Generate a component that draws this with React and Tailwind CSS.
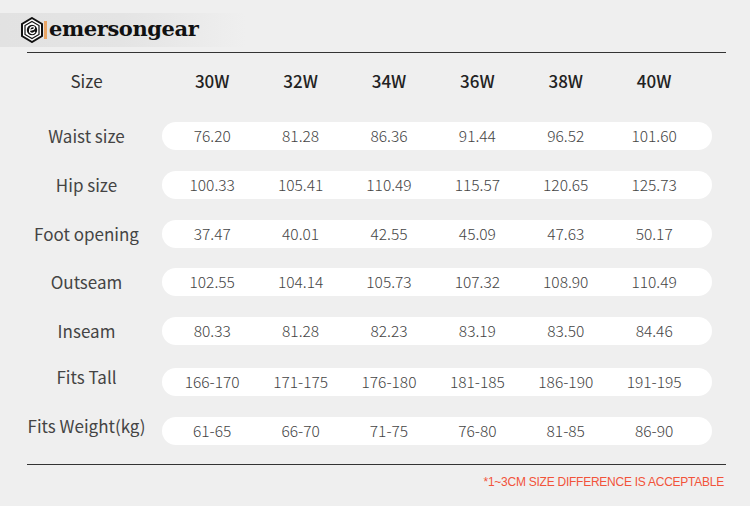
import React from 'react'

const cols = ['30W', '32W', '34W', '36W', '38W', '40W']

const rows = [
  { label: 'Waist size', values: ['76.20', '81.28', '86.36', '91.44', '96.52', '101.60'], top: 'mt-[13px]' },
  { label: 'Hip size', values: ['100.33', '105.41', '110.49', '115.57', '120.65', '125.73'], top: 'mt-[21px]' },
  { label: 'Foot opening', values: ['37.47', '40.01', '42.55', '45.09', '47.63', '50.17'], top: 'mt-[21px]' },
  { label: 'Outseam', values: ['102.55', '104.14', '105.73', '107.32', '108.90', '110.49'], top: 'mt-[20px]' },
  { label: 'Inseam', values: ['80.33', '81.28', '82.23', '83.19', '83.50', '84.46'], top: 'mt-[21px]' },
  { label: 'Fits Tall', values: ['166-170', '171-175', '176-180', '181-185', '186-190', '191-195'], top: 'mt-[23px]', raised: true },
  { label: 'Fits Weight(kg)', values: ['61-65', '66-70', '71-75', '76-80', '81-85', '86-90'], top: 'mt-[21px]', raised: true },
]

function HexLogo() {
  return (
    <svg width="22" height="26" viewBox="0 0 22 26" className="shrink-0">
      <polygon points="11,1 21,7 21,19 11,25 1,19 1,7" fill="#fff" stroke="#111" strokeWidth="2" />
      <polygon points="11,4.5 18,8.5 18,17.5 11,21.5 4,17.5 4,8.5" fill="none" stroke="#111" strokeWidth="1.2" />
      <circle cx="11" cy="13" r="5.2" fill="#111" />
      <path d="M8.6 14.6 C8.4 11 10 9.4 12.2 9.6 C13.8 9.8 13.9 11.6 12.4 12.3 L9.8 13.1 M9 15.6 C10.4 16.8 12.2 16.6 13.6 15.2" fill="none" stroke="#fff" strokeWidth="1.3" strokeLinecap="round" />
    </svg>
  )
}

export default function App() {
  return (
    <div
      className="w-[750px] h-[506px] bg-[#efefef] overflow-hidden text-[#444]"
      style={{ fontFamily: '"Noto Sans CJK SC", "Noto Sans", sans-serif' }}
    >
      {/* logo band */}
      <div className="mt-[13px] h-[34px] w-[245px] bg-gradient-to-r from-[#e2e2e2] via-[#e4e4e4] to-[#efefef] flex items-center pl-[21px]">
        <HexLogo />
        <div className="w-[3px] h-[18px] bg-[#e9a565] ml-[1px]" />
        <span
          className="ml-[2px] text-[21px] leading-none font-black tracking-[-0.4px] text-[#111] -mt-[4px]"
          style={{ fontFamily: '"DejaVu Serif", "Liberation Serif", serif' }}
        >
          emersongear
        </span>
      </div>

      <div className="ml-[27px] w-[699px]">
        <div className="mt-[5px] h-px bg-[#333]" />

        {/* header */}
        <div className="flex h-[56px] items-center">
          <div className="w-[119px] text-center text-[17px] text-[#333]">Size</div>
          <div className="flex ml-[22px]">
            {cols.map(c => (
              <div key={c} className="w-[88.4px] text-center text-[17px] font-medium text-[#222]">{c}</div>
            ))}
          </div>
        </div>

        {rows.map(r => (
          <div key={r.label} className={`flex h-[28px] items-center ${r.top}`}>
            <div className={`w-[119px] text-center text-[17px] whitespace-nowrap text-[#444] ${r.raised ? '-mt-[10px]' : ''}`}>
              {r.label}
            </div>
            <div className="ml-[16px] w-[550px] h-[28px] bg-white rounded-full flex items-center pl-[6px]">
              {r.values.map((v, i) => (
                <div key={i} className="w-[88.4px] text-center text-[15.5px] font-light text-[#444] leading-none">{v}</div>
              ))}
            </div>
          </div>
        ))}

        <div className="mt-[19px] h-px bg-[#333]" />

        <div
          className="mt-[11px] pr-[2px] text-right text-[12px] leading-none tracking-[-0.25px] text-[#f2533a]"
          style={{ fontFamily: '"Liberation Sans", Arial, sans-serif' }}
        >
          *1~3CM SIZE DIFFERENCE IS ACCEPTABLE
        </div>
      </div>
    </div>
  )
}
